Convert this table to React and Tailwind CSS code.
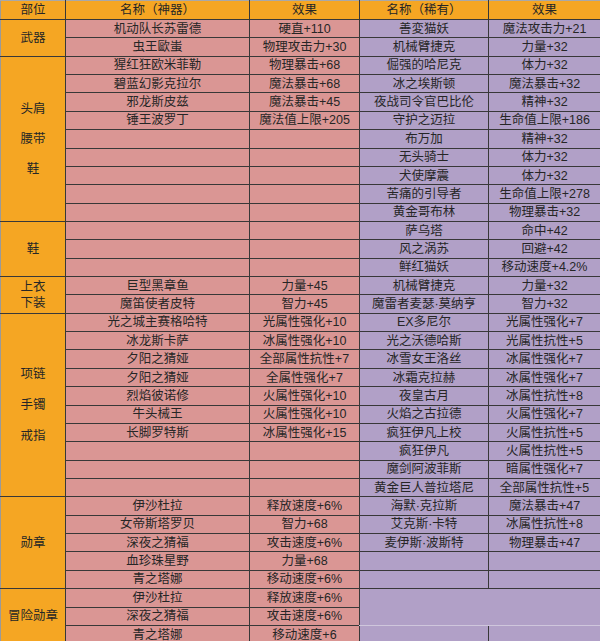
const groups = [
  {
    label: ['武器'],
    rows: [
      ['机动队长苏雷德', '硬直+110', '善変猫妖', '魔法攻击力+21'],
      ['虫王歐蚩', '物理攻击力+30', '机械臂捷克', '力量+32'],
    ],
  },
  {
    label: ['头肩', '腰带', '鞋'],
    gap: 'gap-[14px]',
    rows: [
      ['猩红狂欧米菲勒', '物理暴击+68', '倔强的哈尼克', '体力+32'],
      ['碧蓝幻影克拉尔', '魔法暴击+68', '冰之埃斯顿', '魔法暴击+32'],
      ['邪龙斯皮兹', '魔法暴击+45', '夜战司令官巴比伦', '精神+32'],
      ['锤王波罗丁', '魔法值上限+205', '守护之迈拉', '生命值上限+186'],
      ['', '', '布万加', '精神+32'],
      ['', '', '无头骑士', '体力+32'],
      ['', '', '犬使摩震', '体力+32'],
      ['', '', '苦痛的引导者', '生命值上限+278'],
      ['', '', '黄金哥布林', '物理暴击+32'],
    ],
  },
  {
    label: ['鞋'],
    rows: [
      ['', '', '萨乌塔', '命中+42'],
      ['', '', '风之涡苏', '回避+42'],
      ['', '', '鲜红猫妖', '移动速度+4.2%'],
    ],
  },
  {
    label: ['上衣', '下装'],
    gap: 'gap-0',
    rows: [
      ['巨型黑章鱼', '力量+45', '机械臂捷克', '力量+32'],
      ['魔笛使者皮特', '智力+45', '魔雷者麦瑟·莫纳亨', '智力+32'],
    ],
  },
  {
    label: ['项链', '手镯', '戒指'],
    gap: 'gap-[15px]',
    rows: [
      ['光之城主赛格哈特', '光属性强化+10', 'EX多尼尔', '光属性强化+7'],
      ['冰龙斯卡萨', '冰属性强化+10', '光之沃德哈斯', '光属性抗性+5'],
      ['夕阳之猜娅', '全部属性抗性+7', '冰雪女王洛丝', '冰属性强化+7'],
      ['夕阳之猜娅', '全属性强化+7', '冰霜克拉赫', '冰属性强化+7'],
      ['烈焰彼诺修', '火属性强化+10', '夜皇古月', '冰属性抗性+8'],
      ['牛头械王', '火属性强化+10', '火焰之古拉德', '火属性强化+7'],
      ['长脚罗特斯', '冰属性强化+15', '疯狂伊凡上校', '火属性抗性+5'],
      ['', '', '疯狂伊凡', '火属性抗性+5'],
      ['', '', '魔剑阿波菲斯', '暗属性强化+7'],
      ['', '', '黄金巨人普拉塔尼', '全部属性抗性+5'],
    ],
  },
  {
    label: ['勋章'],
    rows: [
      ['伊沙杜拉', '释放速度+6%', '海默·克拉斯', '魔法暴击+47'],
      ['女帝斯塔罗贝', '智力+68', '艾克斯·卡特', '冰属性抗性+8'],
      ['深夜之猜福', '攻击速度+6%', '麦伊斯·波斯特', '物理暴击+47'],
      ['血珍珠星野', '力量+68', '', ''],
      ['青之塔娜', '移动速度+6%', '', ''],
    ],
  },
  {
    label: ['冒险勋章'],
    merged: true,
    rows: [
      ['伊沙杜拉', '释放速度+6%'],
      ['深夜之猜福', '攻击速度+6%'],
      ['青之塔娜', '移动速度+6', '', ''],
    ],
  },
]

const cell = 'border border-[#383838] p-0 text-center align-middle whitespace-nowrap'
const pink = `${cell} bg-[#da9694]`
const purple = `${cell} bg-[#b1a0c7]`

export default function App() {
  return (
    <div className="h-[641px] w-[600px] overflow-hidden bg-white">
      <table className="w-[600px] table-fixed border-collapse font-['Liberation_Sans','Noto_Sans_CJK_SC',sans-serif] text-[12.5px] leading-[16px] text-[#262626]">
        <colgroup>
          <col className="w-[65px]" />
          <col className="w-[184px]" />
          <col className="w-[110px]" />
          <col className="w-[129px]" />
          <col className="w-[112px]" />
        </colgroup>
        <thead>
          <tr className="h-[19px] bg-[#f5a623]">
            <th className={`${cell} border-l-[#9a9a9a] border-t-[#a8a8a8] font-normal`}>部位</th>
            <th className={`${cell} border-t-[#a8a8a8] font-normal`}>名称（神器）</th>
            <th className={`${cell} border-t-[#a8a8a8] font-normal`}>效果</th>
            <th className={`${cell} border-t-[#a8a8a8] font-normal`}>名称（稀有）</th>
            <th className={`${cell} border-t-[#a8a8a8] font-normal`}>效果</th>
          </tr>
        </thead>
        <tbody>
          {groups.map((g, gi) =>
            g.rows.map((r, ri) => (
              <tr key={`${gi}-${ri}`} className="h-[18.36px]">
                {ri === 0 && (
                  <td rowSpan={g.rows.length} className={`${cell} border-l-[#9a9a9a] bg-[#f5a623]`}>
                    <div className={`flex flex-col items-center ${g.gap || ''}`}>
                      {g.label.map((l) => (
                        <span key={l}>{l}</span>
                      ))}
                    </div>
                  </td>
                )}
                <td className={pink}>{r[0]}</td>
                <td className={pink}>{r[1]}</td>
                {g.merged && ri === 0 && (
                  <td colSpan={2} rowSpan={2} className={`${purple} border-b-[#cfc6dc]`} />
                )}
                {r.length > 2 && (
                  <>
                    <td className={purple}>{r[2]}</td>
                    <td className={purple}>{r[3]}</td>
                  </>
                )}
              </tr>
            ))
          )}
        </tbody>
      </table>
    </div>
  )
}
